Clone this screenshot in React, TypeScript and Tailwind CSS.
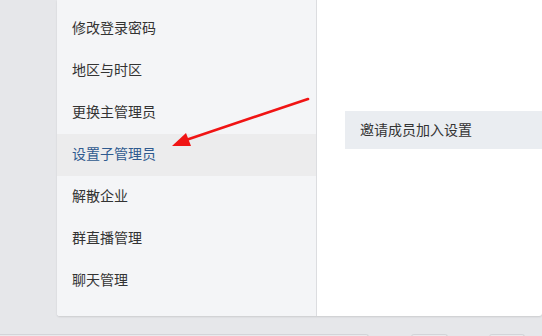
const menu = ["修改登录密码", "地区与时区", "更换主管理员", "设置子管理员", "解散企业", "群直播管理", "聊天管理"];

export default function App() {
  const active = "设置子管理员";

  return (
    <div
      className="relative w-[542px] h-[336px] overflow-hidden bg-[#e6e7ea]"
      style={{ fontFamily: '"Noto Sans CJK SC", "Noto Sans", sans-serif' }}
    >
      {/* Settings card */}
      <div className="ml-[57px] h-[316px] flex bg-white rounded-b-[3px] shadow-[0_1px_2px_rgba(0,0,0,0.12)] overflow-hidden">
        <div className="w-[260px] shrink-0 bg-[#f4f5f7] border-r border-[#dcdde0] pt-2">
          {menu.map((item) => (
            <div
              key={item}
              className={`h-[42px] flex items-center pl-[15px] pb-[3px] text-[14px] ${
                item === active ? "bg-[#ececed] text-[#2f5a8f]" : "text-[#333333]"
              }`}
            >
              {item}
            </div>
          ))}
        </div>
        <div className="flex-1 pl-[28px] pt-[111px]">
          <div className="h-[38px] bg-[#eaedf1] flex items-center pl-[15px] pb-[2px] text-[14px] text-[#333333]">
            邀请成员加入设置
          </div>
        </div>
      </div>

      {/* Bottom controls, mostly cut off */}
      <div className="mt-[18px] flex">
        <div className="w-[369px] h-3 border-t border-r border-[#d3d4d8] rounded-tr-[3px] bg-[#e9eaed]" />
        <div className="ml-[42px] w-[37px] h-3 border-t border-x border-[#d3d4d8] rounded-t-[3px] bg-[#e9eaed]" />
        <div className="ml-[41px] w-[36px] h-3 border-t border-x border-[#d3d4d8] rounded-t-[3px] bg-[#e9eaed]" />
      </div>

      {/* Red annotation arrow */}
      <svg className="absolute left-0 top-0 pointer-events-none" width="542" height="336" viewBox="0 0 542 336">
        <line x1="308" y1="99" x2="186" y2="140" stroke="#f01414" strokeWidth="2.6" strokeLinecap="round" />
        <polygon points="172,146 186,133 191,146" fill="#f01414" />
      </svg>
    </div>
  );
}
